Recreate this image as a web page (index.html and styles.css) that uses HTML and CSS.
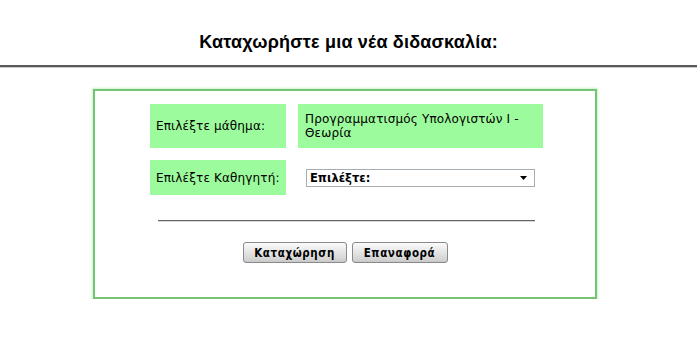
FILE: index.html
```html
<!DOCTYPE html>
<html lang="el">
<head>
<meta charset="utf-8">
<title>Καταχώρηση διδασκαλίας</title>
<link rel="stylesheet" href="styles.css">
</head>
<body>
<h1 class="title">Καταχωρήστε μια νέα διδασκαλία:</h1>
<div class="rule"></div>
<form class="panel">
  <div class="grid">
    <div class="label tall">Επιλέξτε μάθημα:</div>
    <div class="value tall">Προγραμματισμός Υπολογιστών Ι -<br>Θεωρία</div>
    <div class="label short">Επιλέξτε Καθηγητή:</div>
    <div class="cell short">
      <div class="select">
        <span>Επιλέξτε:</span>
        <svg class="arrow" width="7" height="4" viewBox="0 0 7 4"><path d="M0 0H7L3.5 4Z" fill="#000"/></svg>
      </div>
    </div>
  </div>
  <div class="sep"></div>
  <div class="buttons">
    <button type="button" class="btn btn-submit">Καταχώρηση</button>
    <button type="button" class="btn btn-reset">Επαναφορά</button>
  </div>
</form>
</body>
</html>
```

FILE: styles.css
```css
html, body {
  margin: 0;
  padding: 0;
  background: #fff;
}
body {
  width: 697px;
  font-family: "DejaVu Sans", Verdana, sans-serif;
  color: #000;
}
.title {
  margin: 0;
  padding-top: 30px;
  height: 24px;
  line-height: 24px;
  text-align: center;
  font-family: "Liberation Sans", Arial, sans-serif;
  font-weight: bold;
  font-size: 18px;
  letter-spacing: 0.2px;
}
.rule {
  margin-top: 11px;
  height: 2px;
  background: #5a5a5a;
  border-bottom: 1px solid #c8c8c8;
}
.panel {
  margin: 21px 0 0 93px;
  width: 500px;
  height: 206px;
  border: 2px solid #74c474;
  box-shadow: 0 0 2px 1px #c8f5c8;
  display: flex;
  flex-direction: column;
  align-items: center;
}
.grid {
  margin-top: 13px;
  margin-left: 3px;
  display: grid;
  grid-template-columns: 136px 245px;
  column-gap: 12px;
  row-gap: 12px;
}
.label, .value {
  background: #9cfb9c;
  font-size: 12px;
  letter-spacing: 0.15px;
  display: flex;
  align-items: center;
  padding-left: 6px;
}
.tall { height: 44px; }
.short { height: 35px; }
.value {
  line-height: 14px;
  align-items: flex-start;
  padding-left: 7px;
  padding-top: 8px;
  height: 36px;
}
.cell {
  display: flex;
  align-items: center;
  padding-left: 8px;
}
.select {
  box-sizing: border-box;
  width: 229px;
  height: 18px;
  border: 1px solid #a5acb2;
  background: #fff;
  display: flex;
  align-items: center;
  justify-content: space-between;
  padding: 0 7px 0 3px;
  font-size: 11.5px;
  font-weight: bold;
}
.arrow { display: block; margin-top: 1px; }
.sep {
  margin-top: 25px;
  margin-left: 3px;
  width: 377px;
  height: 1px;
  background: #666;
  border-bottom: 1px solid #d8d8d8;
}
.buttons {
  margin-top: 20px;
  display: flex;
  gap: 5px;
}
.btn {
  height: 21px;
  border: 1px solid #8a8a8a;
  border-radius: 3px;
  background: linear-gradient(#fbfbfb, #e6e6e6 45%, #d4d4d4 85%, #c8c8c8);
  font-family: "DejaVu Sans Condensed", "DejaVu Sans", Verdana, sans-serif;
  font-stretch: condensed;
  font-size: 11.5px;
  font-weight: bold;
  color: #000;
  padding: 0;
  letter-spacing: 0.6px;
}
.btn-submit { width: 104px; }
.btn-reset { width: 96px; }
```
